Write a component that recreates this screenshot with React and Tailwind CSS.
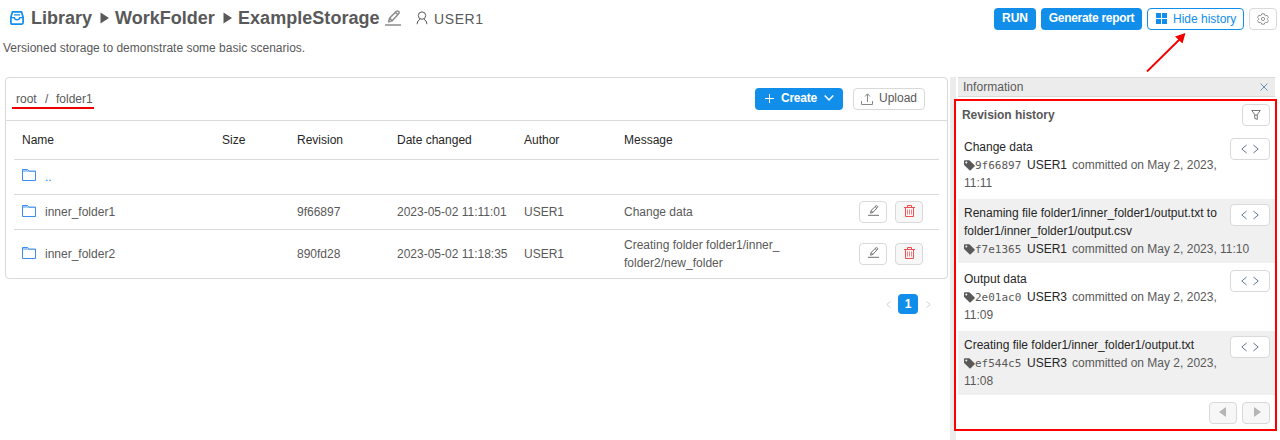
import React from "react";

const stroke = { fill: "none", stroke: "currentColor" };

function InboxIcon() {
  return (
    <svg width="16" height="16" viewBox="0 0 16 16" {...stroke} strokeWidth="1.7" className="text-[#108ee9]">
      <path d="M1.9 7.2 3.4 1.9h9.2l1.5 5.3v5.6q0 1.3-1.3 1.3H3.2q-1.3 0-1.3-1.3z" strokeLinejoin="round" />
      <path d="M2 7.6h3.2q.4 2.2 2.8 2.2t2.8-2.2H14M5 4.9h6" strokeWidth="1.4" />
    </svg>
  );
}

function PencilIcon({ size, weight }) {
  return (
    <svg width={size} height={size} viewBox="0 0 16 16" {...stroke} strokeWidth={weight}>
      <path d="M0 15h16" />
      <path d="m3.6 11.9 1-3.9 6.8-6.7q.9-.8 2.1.1t.3 2.1L7 10.9zM4.7 8.1 7 10.7M10.3 2.4l2.6 2.2" strokeLinejoin="round" />
    </svg>
  );
}

function UserIcon() {
  return (
    <svg width="12" height="14" viewBox="0 0 12 14" {...stroke} strokeWidth="1">
      <circle cx="6" cy="4.6" r="3.7" />
      <path d="M1 13.2q.2-3.7 3.2-5.1M11 13.2q-.2-3.7-3.2-5.1" />
    </svg>
  );
}

function GearIcon() {
  return (
    <svg width="12" height="12" viewBox="0 0 12 12" {...stroke} strokeWidth="0.8">
      <path d="m4.7.8-.4 1.3-1 .6-1.5-.4L.6 4.4l1 1v1.2l-1 1 1.2 2.1 1.5-.4 1 .6.4 1.3h2.6l.4-1.3 1-.6 1.5.4 1.2-2.1-1-1V5.4l1-1-1.2-2.1-1.5.4-1-.6L7.3.8z" />
      <circle cx="6" cy="6" r="1.6" />
    </svg>
  );
}

function Caret({ className }) {
  return (
    <svg width="9" height="12" viewBox="0 0 9 12" fill="currentColor" className={className}>
      <path d="M.5.5v11L9 6z" />
    </svg>
  );
}

function SmallCaret({ flip }) {
  return (
    <svg width="7" height="10" viewBox="0 0 7 10" fill="currentColor">
      <path d={flip ? "M7 0v10L0 5z" : "M0 0v10l7-5z"} />
    </svg>
  );
}

function FolderIcon() {
  return (
    <svg width="14" height="12" viewBox="0 0 14 12" {...stroke} className="text-[#3c8df0]">
      <path d="M.5 11.5V.5h5l1.3 1.6h6.7v9.4z" />
      <path d="M.5 1.4h5M.5 2.4h13" strokeOpacity=".5" />
    </svg>
  );
}

function TrashIcon() {
  return (
    <svg width="11" height="12" viewBox="0 0 11 12" {...stroke} strokeWidth="1">
      <path d="M0 2.5h11M3.5 2.5v-2h4v2M1.5 2.5v9h8v-9" />
      <path d="M3.5 4.5v5M5.5 4.5v5M7.5 4.5v5" strokeOpacity=".7" />
    </svg>
  );
}

function TagIcon() {
  return (
    <svg width="11" height="11" viewBox="0 0 11 11" fill="currentColor" className="shrink-0">
      <path fillRule="evenodd" d="M0 .9Q0 .2.8.2h3.9q.6 0 1 .4l4.8 4.7q.6.6 0 1.2l-3.8 3.8q-.6.6-1.2 0L.6 5.5Q0 5.1 0 4.5zm2.3.5a1 1 0 1 0 0 2 1 1 0 0 0 0-2z" />
    </svg>
  );
}

function Arrows() {
  return (
    <svg width="18" height="10" viewBox="0 0 18 10" {...stroke} strokeWidth="1">
      <path d="M5.6 1 .8 5l4.8 4M12.4 1l4.8 4-4.8 4" />
    </svg>
  );
}

function IconButton({ className = "", children }) {
  return (
    <button className={`flex items-center justify-center rounded-[4px] border border-[#d9d9d9] ${className}`}>
      {children}
    </button>
  );
}

const columns = "grid grid-cols-[200px_75px_100px_127px_100px_235px_36px_44px] items-center pl-2";

const files = [
  { name: "inner_folder1", rev: "9f66897", date: "2023-05-02 11:11:01", msg: ["Change data"], row: "h-[35px] border-b border-[#d9d9d9]" },
  { name: "inner_folder2", rev: "890fd28", date: "2023-05-02 11:18:35", msg: ["Creating folder folder1/inner_", "folder2/new_folder"], row: "h-[48px]" },
];

const commits = [
  { title: ["Change data"], hash: "9f66897", user: "USER1", when: "committed on May 2, 2023,", tail: "11:11", bg: "" },
  { title: ["Renaming file folder1/inner_folder1/output.txt to", "folder1/inner_folder1/output.csv"], hash: "f7e1365", user: "USER1", when: "committed on May 2, 2023, 11:10", bg: "bg-[#f0f0f0]" },
  { title: ["Output data"], hash: "2e01ac0", user: "USER3", when: "committed on May 2, 2023,", tail: "11:09", bg: "" },
  { title: ["Creating file folder1/inner_folder1/output.txt"], hash: "ef544c5", user: "USER3", when: "committed on May 2, 2023,", tail: "11:08", bg: "bg-[#f0f0f0]" },
];

function Header() {
  return (
    <header className="flex h-[38px] items-start justify-between pl-[9px] pr-[3px]">
      <div className="flex h-[36px] items-center text-[18px] font-bold">
        <span className="mr-[6px] -mt-[1px]"><InboxIcon /></span>
        <span className="w-[69px]">Library</span>
        <Caret className="mr-[6px]" />
        <span className="w-[108px]">WorkFolder</span>
        <Caret className="mr-[6px]" />
        <span className="w-[147px] tracking-[0.04px]">ExampleStorage</span>
        <span className="w-[31px] -mt-[1px] text-[#8c8c8c]"><PencilIcon size={16} weight={1.5} /></span>
        <UserIcon />
        <span className="ml-[6px] pt-[1px] text-[14px] font-normal tracking-[0.6px]">USER1</span>
      </div>
      <div className="flex gap-[5px] pt-2 text-[12px]">
        <button className="h-[22px] w-[42px] rounded-[4px] bg-[#108ee9] pb-[2px] font-bold text-white">RUN</button>
        <button className="h-[22px] w-[101px] rounded-[4px] bg-[#108ee9] pb-[2px] font-bold tracking-[-0.3px] text-white">Generate report</button>
        <button className="flex h-[22px] w-[97px] items-center rounded-[4px] border border-[#108ee9] pl-[8px] text-[#108ee9]">
          <svg width="11" height="11" viewBox="0 0 11 11" fill="currentColor" className="mr-[6px] -mt-px">
            <path d="M0 0h5v5H0zM6 0h5v5H6zM0 6h5v5H0zM6 6h5v5H6z" />
          </svg>
          Hide history
        </button>
        <IconButton className="h-[22px] w-7 text-[#777]"><GearIcon /></IconButton>
      </div>
    </header>
  );
}

function Storage() {
  return (
    <section className="w-[943px] shrink-0">
      <div className="h-[202px] rounded-[4px] border border-[#d9d9d9]">
        <div className="flex h-[43px] items-center justify-between border-b border-[#d9d9d9] pl-[6px] pr-[22px]">
          <div className="flex h-[20px] w-[82px] whitespace-pre border-b-2 border-[#f00000] pl-[4px] pt-[1px] leading-[18px]">
            <span className="w-[29px]">root</span><span className="w-[11px]">/</span><span>folder1</span>
          </div>
          <div className="flex gap-[10px]">
            <button className="flex h-[22px] w-[88px] items-center rounded-[4px] bg-[#108ee9] pb-[2px] pl-[10px] font-bold text-white">
              <svg width="9" height="9" viewBox="0 0 9 9" {...stroke} strokeWidth="1" className="mr-[7px]"><path d="M4.5 0v9M0 4.5h9" /></svg>
              <span className="w-[43px] text-left tracking-[-0.25px]">Create</span>
              <svg width="10" height="8" viewBox="0 0 10 8" {...stroke} strokeWidth="1.5"><path d="m.7 1.4 4.3 4.6 4.3-4.6" /></svg>
            </button>
            <IconButton className="h-[22px] w-[72px]">
              <svg width="12" height="12" viewBox="0 0 12 12" {...stroke} strokeWidth="1" className="mr-[6px] text-[#888]"><path d="M.5 8v3.5h11V8M6.5 9V1M4 3.5 6.5.8 9 3.5" /></svg>
              <span className="pb-[2px]">Upload</span>
            </IconButton>
          </div>
        </div>
        <div className="px-2">
          <div className={`${columns} h-[39px] border-b border-[#d9d9d9] text-[#262626]`}>
            <span>Name</span><span>Size</span><span>Revision</span><span>Date changed</span><span>Author</span><span>Message</span>
          </div>
          <div className={`${columns} h-[35px] border-b border-[#d9d9d9]`}>
            <span className="flex items-center gap-[9px] text-[#108ee9]"><span className="-mt-[4px]"><FolderIcon /></span>..</span>
          </div>
          {files.map((f) => (
            <div key={f.name} className={`${columns} ${f.row}`}>
              <span className="flex items-center gap-[9px]"><span className="-mt-[3px]"><FolderIcon /></span>{f.name}</span>
              <span />
              <span>{f.rev}</span>
              <span className="whitespace-nowrap">{f.date}</span>
              <span>USER1</span>
              <span className="whitespace-nowrap">{f.msg.map((m) => <span key={m} className="block">{m}</span>)}</span>
              <IconButton className="h-[22px] w-7 pb-[3px] text-[#666]"><PencilIcon size={11} weight={1.35} /></IconButton>
              <IconButton className="h-[22px] w-7 bg-[#f7f7f7] pb-[2px] text-[#f04e50]"><TrashIcon /></IconButton>
            </div>
          ))}
        </div>
      </div>
      <div className="mt-[15px] flex items-center justify-end gap-[8px] pr-[17px] text-[#d0d0d0]">
        <svg width="5" height="7" viewBox="0 0 5 7" {...stroke}><path d="M4.5.5.8 3.5l3.7 3" /></svg>
        <span className="-ml-px flex h-5 w-5 items-center justify-center rounded-[4px] bg-[#108ee9] font-bold text-white">1</span>
        <svg width="5" height="7" viewBox="0 0 5 7" {...stroke}><path d="m.5.5 3.7 3-3.7 3" /></svg>
      </div>
    </section>
  );
}

function Commit({ c }) {
  return (
    <div className={`flex h-16 justify-between p-[5px] pl-[6px] ${c.bg}`}>
      <div className="w-[262px] shrink-0 whitespace-nowrap">
        {c.title.map((t) => <div key={t} className="text-[#262626]">{t}</div>)}
        <div className="flex h-[18px] w-[290px] items-center">
          <TagIcon />
          <span className="w-[52px] shrink-0 pt-[1px] font-['DejaVu_Sans_Mono','Liberation_Mono',monospace] text-[11px]">{c.hash}</span>
          <span className="w-[45px] shrink-0 text-[#262626]">{c.user}</span>
          <span>{c.when}</span>
        </div>
        {c.tail && <div>{c.tail}</div>}
      </div>
      <IconButton className="h-[22px] w-10 shrink-0 bg-white text-[#5f7695]"><Arrows /></IconButton>
    </div>
  );
}

function Information() {
  return (
    <aside className="ml-[2px] flex w-[330px]">
      <div className="w-[6px] bg-[#ececec]" />
      <div className="ml-[2px] w-[317px]">
        <div className="flex h-[20px] items-center justify-between border-y border-[#d9d9d9] bg-[#ececec] pl-[5px] pr-[7px]">
          <span className="tracking-[0.03px]">Information</span>
          <svg width="8" height="8" viewBox="0 0 8 8" {...stroke} className="text-[#6f8fa5]"><path d="m.5.5 7 7M7.5.5l-7 7" /></svg>
        </div>
        <div className="-ml-1 mt-[2px] h-[332px] w-[323px] border-2 border-[#f00] pl-[2px]">
          <div className="flex h-[32px] w-[317px] items-start justify-between pl-[4px] pr-[5px] pt-[3px]">
            <span className="pt-[2px] font-bold tracking-[-0.05px]">Revision history</span>
            <IconButton className="h-[22px] w-7 text-[#777]">
              <svg width="10" height="10" viewBox="0 0 10 10" {...stroke}><path d="M.8.5h8.4L6.3 4.6v4.8l-2.6-1V4.6zM3.7 5h2.6" /></svg>
            </IconButton>
          </div>
          <div className="flex w-[317px] flex-col gap-[2px]">
            {commits.map((c) => <Commit key={c.hash} c={c} />)}
          </div>
          <div className="flex w-[317px] justify-end gap-[5px] pr-[5px] pt-[7px] text-[#b5b5b5]">
            <IconButton className="h-[22px] w-7 bg-[#f7f7f7] pb-[3px] pr-[2px]"><SmallCaret flip /></IconButton>
            <IconButton className="h-[22px] w-7 bg-[#f7f7f7] pb-[3px] pl-[2px]"><SmallCaret /></IconButton>
          </div>
        </div>
      </div>
    </aside>
  );
}

export default function App() {
  return (
    <div className="relative h-[440px] w-[1280px] overflow-hidden bg-white font-['Liberation_Sans',Arial,sans-serif] text-[12px] leading-[18px] text-[#595959]">
      <Header />
      <p className="h-[39px] pl-[3px] pt-px">Versioned storage to demonstrate some basic scenarios.</p>
      <main className="flex h-[363px] pl-[5px]">
        <Storage />
        <Information />
      </main>
      <svg width="44" height="44" viewBox="0 0 44 44" className="absolute left-[1144px] top-[30px] text-[#f00000]">
        <path d="M3 41.5 36 9" stroke="currentColor" strokeWidth="1.8" />
        <path d="M41.5 3 38.5 13.5 31 6.5z" fill="currentColor" />
      </svg>
    </div>
  );
}
